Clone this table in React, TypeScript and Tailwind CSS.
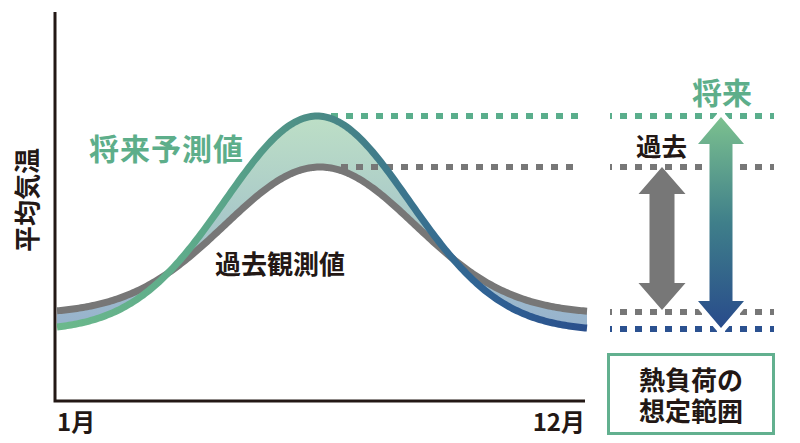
// bell curve: y = peak + depth * (1 - exp(-d^2 / 2s^2))
function bell(cx: number, peak: number, depth: number, s: number, x0: number, x1: number) {
  const pts: string[] = [];
  for (let x = x0; x <= x1; x += 2) {
    const d = x - cx;
    const y = peak + depth * (1 - Math.exp(-(d * d) / (2 * s * s)));
    pts.push(`${x},${y.toFixed(2)}`);
  }
  return pts;
}

const past = bell(320, 167, 147, 95, 57, 587);
const future = bell(317, 116, 215, 92, 57, 587);

const pastPath = "M" + past.join(" L");
const futurePath = "M" + future.join(" L");
const bandPath = "M" + future.join(" L") + " L" + [...past].reverse().join(" L") + " Z";

function arrow(cx: number, top: number, bottom: number, head: number, hw: number, sw: number) {
  return [
    `M${cx},${top}`,
    `L${cx + hw},${top + head}`,
    `L${cx + sw},${top + head}`,
    `L${cx + sw},${bottom - head}`,
    `L${cx + hw},${bottom - head}`,
    `L${cx},${bottom}`,
    `L${cx - hw},${bottom - head}`,
    `L${cx - sw},${bottom - head}`,
    `L${cx - sw},${top + head}`,
    `L${cx - hw},${top + head}`,
    "Z",
  ].join(" ");
}

function Chart() {
  return (
    <svg width="595" height="443" viewBox="0 0 595 443" className="shrink-0">
      <defs>
        <linearGradient id="band" gradientUnits="userSpaceOnUse" x1="0" y1="116" x2="0" y2="320">
          <stop offset="0" stopColor="#bddfc6" />
          <stop offset="0.5" stopColor="#a9c9c9" />
          <stop offset="1" stopColor="#98b4cd" />
        </linearGradient>
        <linearGradient id="line" gradientUnits="userSpaceOnUse" x1="57" y1="0" x2="586" y2="0">
          <stop offset="0" stopColor="#6cb98c" />
          <stop offset="0.3" stopColor="#5ba78a" />
          <stop offset="0.5" stopColor="#4a8a86" />
          <stop offset="0.62" stopColor="#3f7a8b" />
          <stop offset="0.8" stopColor="#306394" />
          <stop offset="1" stopColor="#2a4f8c" />
        </linearGradient>
      </defs>

      {/* axes */}
      <path d="M55,12 L55,401 L585,401" fill="none" stroke="#231815" strokeWidth="3" />

      {/* curves + peak guides */}
      <path d={bandPath} fill="url(#band)" />
      <g strokeWidth="6" strokeDasharray="7 8">
        <path d="M331,116 L580,116" stroke="#5aae8c" />
        <path d="M341,167 L580,167" stroke="#777777" />
      </g>
      <path d={pastPath} fill="none" stroke="#777777" strokeWidth="7" />
      <path d={futurePath} fill="none" stroke="url(#line)" strokeWidth="7" />

      <text x="89" y="160" fontSize="30" fill="#5dae8a" letterSpacing="1">将来予測値</text>
      <text x="215" y="274" fontSize="26" fill="#231815">過去観測値</text>
      <text transform="translate(37,200) rotate(-90)" textAnchor="middle" fontSize="26" fill="#231815">
        平均気温
      </text>
      <text x="57" y="431" fontSize="24" fill="#231815">1月</text>
      <text x="585" y="431" fontSize="24" fill="#231815" textAnchor="end">12月</text>
    </svg>
  );
}

function Range() {
  // coordinates relative to x = 595
  const green = arrow(126, 117, 328, 27, 23, 11.5);
  return (
    <svg width="205" height="353" viewBox="0 0 205 353">
      <defs>
        <linearGradient id="arrow" gradientUnits="userSpaceOnUse" x1="0" y1="117" x2="0" y2="328">
          <stop offset="0" stopColor="#7cc18f" />
          <stop offset="0.5" stopColor="#3f7f8a" />
          <stop offset="1" stopColor="#284b8b" />
        </linearGradient>
      </defs>
      <g strokeWidth="6" strokeDasharray="7 8" strokeDashoffset="5">
        <path d="M15,116 L179,116" stroke="#5aae8c" />
        <path d="M15,167 L179,167" stroke="#777777" />
        <path d="M15,312 L179,312" stroke="#777777" />
        <path d="M15,329 L179,329" stroke="#2b5190" />
      </g>
      <path d={arrow(67, 167, 310, 27, 23.5, 12.5)} fill="#777777" />
      <path d={green} fill="none" stroke="#ffffff" strokeWidth="10" />
      <path d={green} fill="url(#arrow)" />
      <text x="97" y="104" fontSize="30" fill="#5dae8a">将来</text>
      <text x="41" y="156" fontSize="25.5" fill="#231815">過去</text>
    </svg>
  );
}

export default function App() {
  return (
    <div className="w-[800px] h-[443px] bg-white overflow-hidden flex font-['Noto_Sans_CJK_JP','Noto_Sans',sans-serif] font-bold">
      <Chart />
      <div className="flex flex-col">
        <Range />
        <div className="ml-[12px] w-[168px] h-[82px] border-[3px] border-[#62b08f] flex flex-col items-center justify-center text-[26px] leading-[31px] text-[#231815]">
          <span>熱負荷の</span>
          <span>想定範囲</span>
        </div>
      </div>
    </div>
  );
}
